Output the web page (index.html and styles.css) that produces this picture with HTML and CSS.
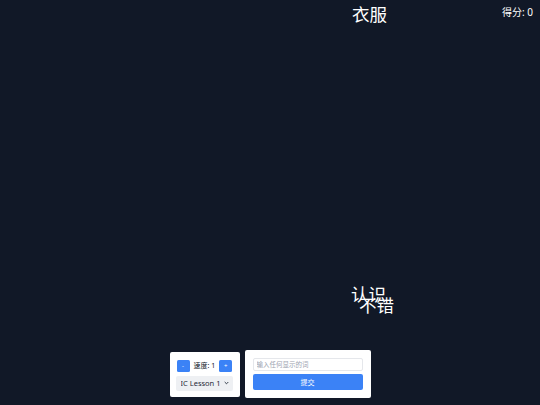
FILE: index.html
```html
<!DOCTYPE html>
<html lang="zh">
<head>
<meta charset="utf-8">
<title>打字游戏</title>
<link rel="stylesheet" href="styles.css">
</head>
<body>
<div class="page">
  <div class="canvas">
    <div class="score">得分: 0</div>
    <div class="word" style="left:352px;top:3px">衣服</div>
    <div class="word" style="left:351px;top:283px">认识</div>
    <div class="word" style="left:359px;top:294px">不错</div>
  </div>
  <div class="controls">
    <div class="panel panel-settings">
      <div class="speed-row">
        <button class="btn-small">-</button>
        <span class="speed-label">速度: 1</span>
        <button class="btn-small">+</button>
      </div>
      <div class="select-wrap">
        <select class="lesson">
          <option>IC Lesson 1</option>
        </select>
        <svg class="chevron" width="5" height="4" viewBox="0 0 5 4"><path d="M0.7 1 L2.5 2.8 L4.3 1" fill="none" stroke="#1f2937" stroke-width="0.9"/></svg>
      </div>
    </div>
    <div class="panel panel-input">
      <input class="word-input" type="text" placeholder="输入任何显示的词">
      <button class="btn-submit">提交</button>
    </div>
  </div>
</div>
</body>
</html>
```

FILE: styles.css
```css
html, body {
  margin: 0;
  padding: 0;
  height: 100%;
}
body {
  background: #111827;
  font-family: "Noto Sans", "Noto Sans CJK SC", sans-serif;
  overflow: hidden;
}
.page {
  display: flex;
  flex-direction: column;
  height: 100vh;
}
.canvas {
  position: relative;
  flex: 1;
}
.score {
  position: absolute;
  top: 5px;
  right: 7px;
  color: #ffffff;
  font-size: 10px;
  line-height: 14px;
}
.word {
  position: absolute;
  color: #ffffff;
  font-family: "Noto Sans CJK SC", sans-serif;
  font-size: 17.5px;
  line-height: 22px;
  white-space: nowrap;
}
.controls {
  display: flex;
  justify-content: center;
  align-items: center;
  gap: 5px;
  padding: 0 0 7px 0;
}
.panel {
  background: #ffffff;
  border-radius: 2px;
  box-sizing: border-box;
}
.panel-settings {
  padding: 8px 6px 6px 6px;
  display: flex;
  flex-direction: column;
  align-items: flex-start;
  gap: 4px;
  height: 45px;
  width: 70px;
}
.speed-row {
  display: flex;
  align-items: center;
  gap: 4px;
  padding-left: 1px;
}
.btn-small {
  width: 13px;
  height: 12px;
  padding: 0;
  border: none;
  border-radius: 1.5px;
  background: #3b82f6;
  color: #ffffff;
  font-family: "Noto Sans", sans-serif;
  font-size: 6px;
  line-height: 12px;
}
.speed-label {
  font-size: 7px;
  line-height: 12px;
  color: #111827;
}
.select-wrap {
  position: relative;
  width: 57px;
  height: 15px;
}
.lesson {
  appearance: none;
  -webkit-appearance: none;
  display: block;
  width: 57px;
  height: 15px;
  border: none;
  border-radius: 2px;
  background-color: #eef0f3;
  color: #1f2937;
  font-family: "Noto Sans", sans-serif;
  font-size: 7.5px;
  padding: 0 0 0 5px;
  margin: 0;
  outline: none;
}
.chevron {
  position: absolute;
  right: 4px;
  top: 5px;
  pointer-events: none;
}
.panel-input {
  width: 126px;
  height: 48px;
  padding: 8px;
  display: flex;
  flex-direction: column;
  gap: 3px;
}
.word-input {
  box-sizing: border-box;
  width: 100%;
  height: 13px;
  margin: 0;
  padding: 0 3px;
  border: 1px solid #e5e7eb;
  border-radius: 2px;
  font-family: "Noto Sans CJK SC", sans-serif;
  font-size: 6.5px;
  color: #111827;
  outline: none;
}
.word-input::placeholder {
  color: #9ca3af;
}
.btn-submit {
  width: 100%;
  height: 17px;
  margin: 0;
  padding: 0;
  border: none;
  border-radius: 2px;
  background: #3b82f6;
  color: #ffffff;
  font-family: "Noto Sans CJK SC", sans-serif;
  font-size: 7px;
}
```
